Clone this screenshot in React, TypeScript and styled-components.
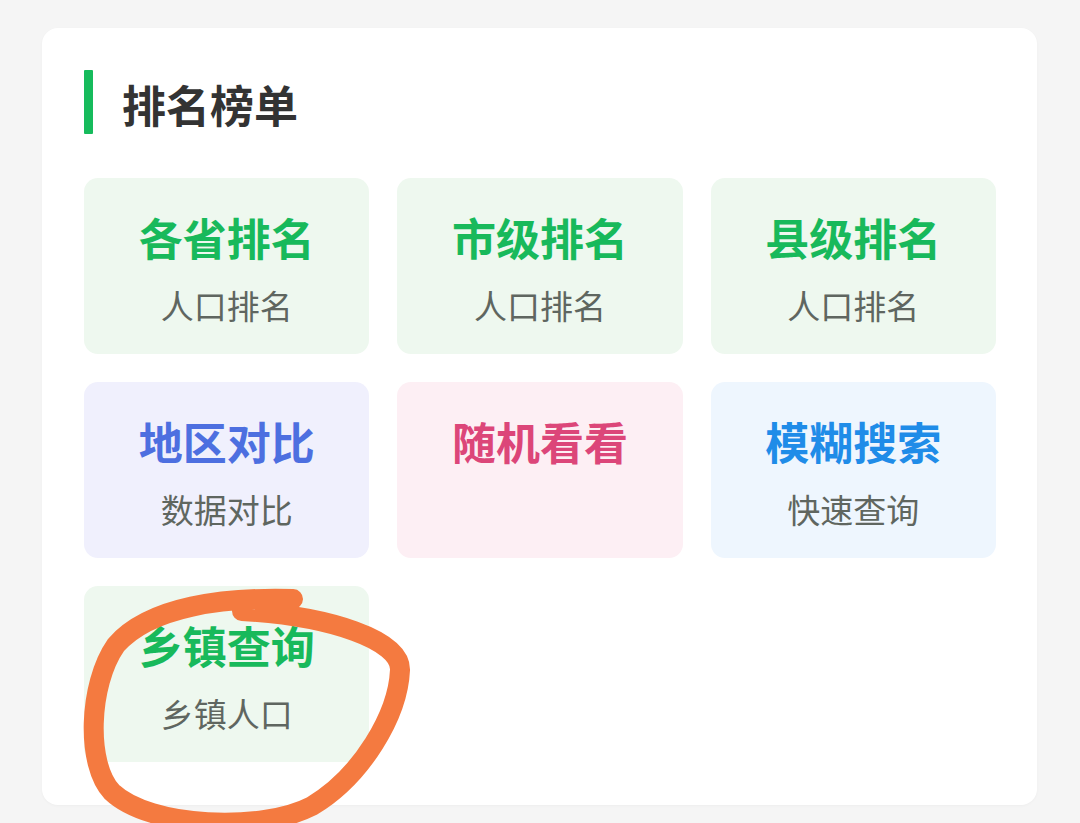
import React from "react";
import styled, { createGlobalStyle } from "styled-components";

const GlobalStyle = createGlobalStyle`
    html, body {
        margin: 0;
        padding: 0;
        background: #f5f5f5;
    }
    body {
        font-family: "Noto Sans CJK SC", "Noto Sans", sans-serif;
    }
`;

const Page = styled.div`
    position: relative;
    width: 1080px;
    height: 823px;
    overflow: hidden;
    padding: 28px 43px 0 42px;
    box-sizing: border-box;
`;

const Card = styled.div`
    background: #ffffff;
    border-radius: 16px;
    padding: 42px 41px 43px 42px;
    box-shadow: 0 1px 3px rgba(0, 0, 0, 0.03);
`;

const Header = styled.div`
    display: flex;
    align-items: center;
    height: 64px;
    margin-bottom: 44px;
`;

const Bar = styled.span`
    width: 9px;
    height: 64px;
    background: #16bb5c;
    border-radius: 1px;
    margin-right: 29px;
`;

const Title = styled.h2`
    margin: 0;
    font-size: 44px;
    font-weight: 700;
    color: #333333;
    line-height: 1;
    padding-top: 4px;
`;

const Grid = styled.div`
    display: grid;
    grid-template-columns: repeat(3, 1fr);
    gap: 28px;
`;

const Tile = styled.div<{ $bg: string }>`
    height: 176px;
    box-sizing: border-box;
    background: ${(p) => p.$bg};
    border-radius: 14px;
    padding-top: 29px;
    display: flex;
    flex-direction: column;
    align-items: center;
`;

const TileTitle = styled.div<{ $color: string }>`
    font-size: 44px;
    font-weight: 700;
    line-height: 60px;
    color: ${(p) => p.$color};
`;

const TileSub = styled.div`
    margin-top: 14px;
    font-size: 33px;
    line-height: 48px;
    color: #5f6660;
`;

const Scribble = styled.svg`
    position: absolute;
    left: 0;
    top: 0;
    pointer-events: none;
`;

interface IItem {
    title: string;
    sub?: string;
    color: string;
    bg: string;
}

const GREEN = { color: "#18b95b", bg: "#eef8ef" };

const items: IItem[] = [
    { title: "各省排名", sub: "人口排名", ...GREEN },
    { title: "市级排名", sub: "人口排名", ...GREEN },
    { title: "县级排名", sub: "人口排名", ...GREEN },
    { title: "地区对比", sub: "数据对比", color: "#4d6fe0", bg: "#f0f0fd" },
    { title: "随机看看", color: "#dc4679", bg: "#fdeff4" },
    { title: "模糊搜索", sub: "快速查询", color: "#1f8ce8", bg: "#eef6fe" },
    { title: "乡镇查询", sub: "乡镇人口", ...GREEN },
];

const App: React.FC = () => {
    return (
        <>
            <GlobalStyle />
            <Page>
                <Card>
                    <Header>
                        <Bar />
                        <Title>排名榜单</Title>
                    </Header>
                    <Grid>
                        {items.map((item) => (
                            <Tile key={item.title} $bg={item.bg}>
                                <TileTitle $color={item.color}>{item.title}</TileTitle>
                                {item.sub && <TileSub>{item.sub}</TileSub>}
                            </Tile>
                        ))}
                    </Grid>
                </Card>
                {/* hand-drawn highlight around the last tile */}
                <Scribble width="1080" height="823" viewBox="0 0 1080 823">
                    <path
                        d="M 293 599 C 225 597, 150 606, 116 645 C 88 685, 86 765, 112 792 C 150 828, 262 832, 312 806 C 362 776, 398 715, 400 670 C 401 640, 330 616, 242 611"
                        fill="none"
                        stroke="#f47a40"
                        strokeWidth="20"
                        strokeLinecap="round"
                        strokeLinejoin="round"
                    />
                </Scribble>
            </Page>
        </>
    );
};

export default App;
